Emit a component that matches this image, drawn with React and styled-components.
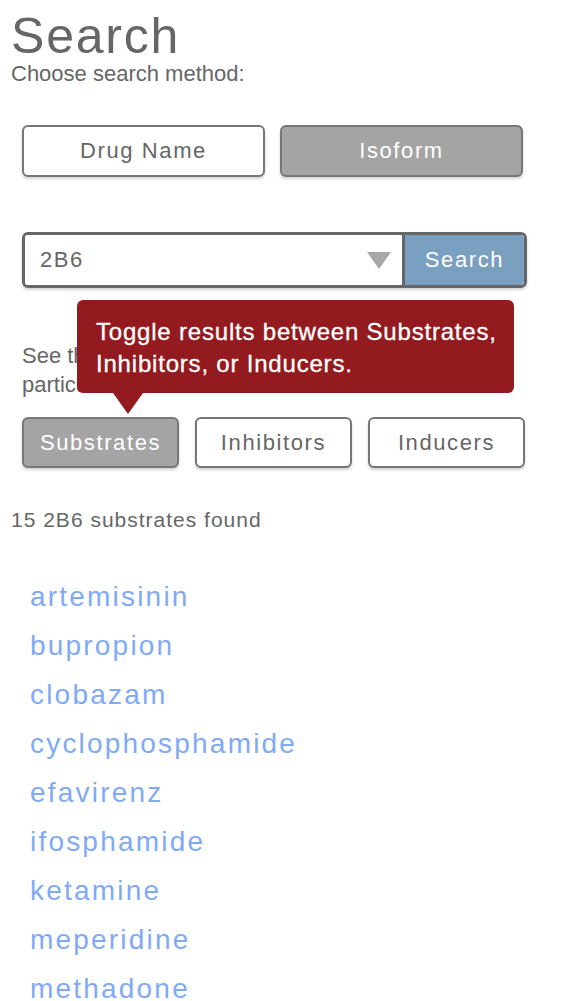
import styled, { createGlobalStyle } from "styled-components"

const GlobalStyle = createGlobalStyle`
  body {
    margin: 0;
    background: #fff;
    font-family: "Liberation Sans", Arial, sans-serif;
    color: #666;
  }
`

const Page = styled.main`
  padding: 11px 0 40px 11px;
  width: 563px;
  box-sizing: border-box;
`

const Title = styled.h1`
  margin: 0;
  font-size: 50px;
  line-height: 50px;
  font-weight: normal;
  letter-spacing: 1.8px;
  color: #666;
`

const Subtitle = styled.p`
  margin: 0;
  font-size: 22px;
  line-height: 26px;
  color: #666;
`

// 검색 방식 선택 버튼
const MethodRow = styled.div`
  display: grid;
  grid-template-columns: 243px 243px;
  gap: 15px;
  margin: 38px 0 0 11px;
`

const ToggleButton = styled.button`
  height: ${(p) => p.$h}px;
  box-sizing: border-box;
  border: 2px solid #777;
  border-radius: 6px;
  background: ${(p) => (p.$active ? "#a4a4a4" : "#fff")};
  color: ${(p) => (p.$active ? "#fff" : "#666")};
  font-family: "Liberation Sans", Arial, sans-serif;
  font-size: 22px;
  letter-spacing: 1.6px;
  box-shadow: 0 2px 3px rgba(0, 0, 0, 0.18);
  padding: 0;
  cursor: pointer;
`

// 아이소폼 선택
const SelectRow = styled.div`
  display: flex;
  width: 505px;
  height: 56px;
  box-sizing: border-box;
  margin: 55px 0 0 11px;
  border: 3px solid #666;
  border-radius: 6px;
  overflow: hidden;
  box-shadow: 0 2px 3px rgba(0, 0, 0, 0.18);
`

const SelectBox = styled.div`
  flex: 1;
  display: flex;
  align-items: center;
  justify-content: space-between;
  padding: 0 11px 0 15px;
  background: #fff;
  font-size: 22px;
  letter-spacing: 1.5px;
  color: #666;
`

const SearchButton = styled.button`
  width: 122px;
  border: none;
  border-left: 3px solid #666;
  background: #7aa0c1;
  color: #fff;
  font-family: "Liberation Sans", Arial, sans-serif;
  font-size: 22px;
  letter-spacing: 1.6px;
  padding: 0;
`

const InfoText = styled.p`
  margin: 53px 0 0 11px;
  font-size: 22px;
  line-height: 29px;
  color: #666;
`

const TypeRow = styled.div`
  position: relative;
  display: grid;
  grid-template-columns: repeat(3, 157px);
  gap: 16px;
  margin: 18px 0 0 11px;
`

const Tooltip = styled.div`
  position: absolute;
  left: 55px;
  bottom: calc(100% + 24px);
  width: 437px;
  box-sizing: border-box;
  padding: 16px 10px 13px 19px;
  background: #931b1f;
  border-radius: 6px;
  color: #fff;
  font-size: 24px;
  line-height: 32px;
  letter-spacing: 0.8px;
  -webkit-text-stroke: 0.3px #fff;

  &::after {
    content: "";
    position: absolute;
    top: 100%;
    left: 36px;
    border-left: 15px solid transparent;
    border-right: 15px solid transparent;
    border-top: 21px solid #931b1f;
  }
`

const ResultCount = styled.p`
  margin: 39px 0 0 0;
  font-size: 21px;
  line-height: 26px;
  letter-spacing: 1px;
  color: #666;
`

const DrugList = styled.ul`
  list-style: none;
  margin: 39px 0 0 19px;
  padding: 0;
`

const DrugItem = styled.li`
  font-size: 28px;
  line-height: 49px;
  letter-spacing: 2.2px;
`

const DrugLink = styled.a`
  color: #80aaf6;
  text-decoration: none;
`

const drugs = [
  "artemisinin",
  "bupropion",
  "clobazam",
  "cyclophosphamide",
  "efavirenz",
  "ifosphamide",
  "ketamine",
  "meperidine",
  "methadone",
  "nevirapine",
  "propofol",
  "selegiline",
  "sertraline",
  "tamoxifen",
  "ticlopidine",
]

const Caret = () => (
  <svg width="24" height="17" viewBox="0 0 24 17">
    <path d="M0 0 H24 L12 17 Z" fill="#a8a8a8" />
  </svg>
)

export default function App() {
  return (
    <Page>
      <GlobalStyle />
      <Title>Search</Title>
      <Subtitle>Choose search method:</Subtitle>
      <MethodRow>
        <ToggleButton $h={52}>Drug Name</ToggleButton>
        <ToggleButton $h={52} $active>Isoform</ToggleButton>
      </MethodRow>
      <SelectRow>
        <SelectBox>
          <span>2B6</span>
          <Caret />
        </SelectBox>
        <SearchButton>Search</SearchButton>
      </SelectRow>
      <InfoText>
        See the substrates, inhibitors, and inducers for a particular isoform.
      </InfoText>
      <TypeRow>
        <Tooltip>
          Toggle results between Substrates,
          <br />
          Inhibitors, or Inducers.
        </Tooltip>
        <ToggleButton $h={51} $active>Substrates</ToggleButton>
        <ToggleButton $h={51}>Inhibitors</ToggleButton>
        <ToggleButton $h={51}>Inducers</ToggleButton>
      </TypeRow>
      <ResultCount>15 2B6 substrates found</ResultCount>
      <DrugList>
        {drugs.map((d) => (
          <DrugItem key={d}>
            <DrugLink href="#">{d}</DrugLink>
          </DrugItem>
        ))}
      </DrugList>
    </Page>
  )
}
